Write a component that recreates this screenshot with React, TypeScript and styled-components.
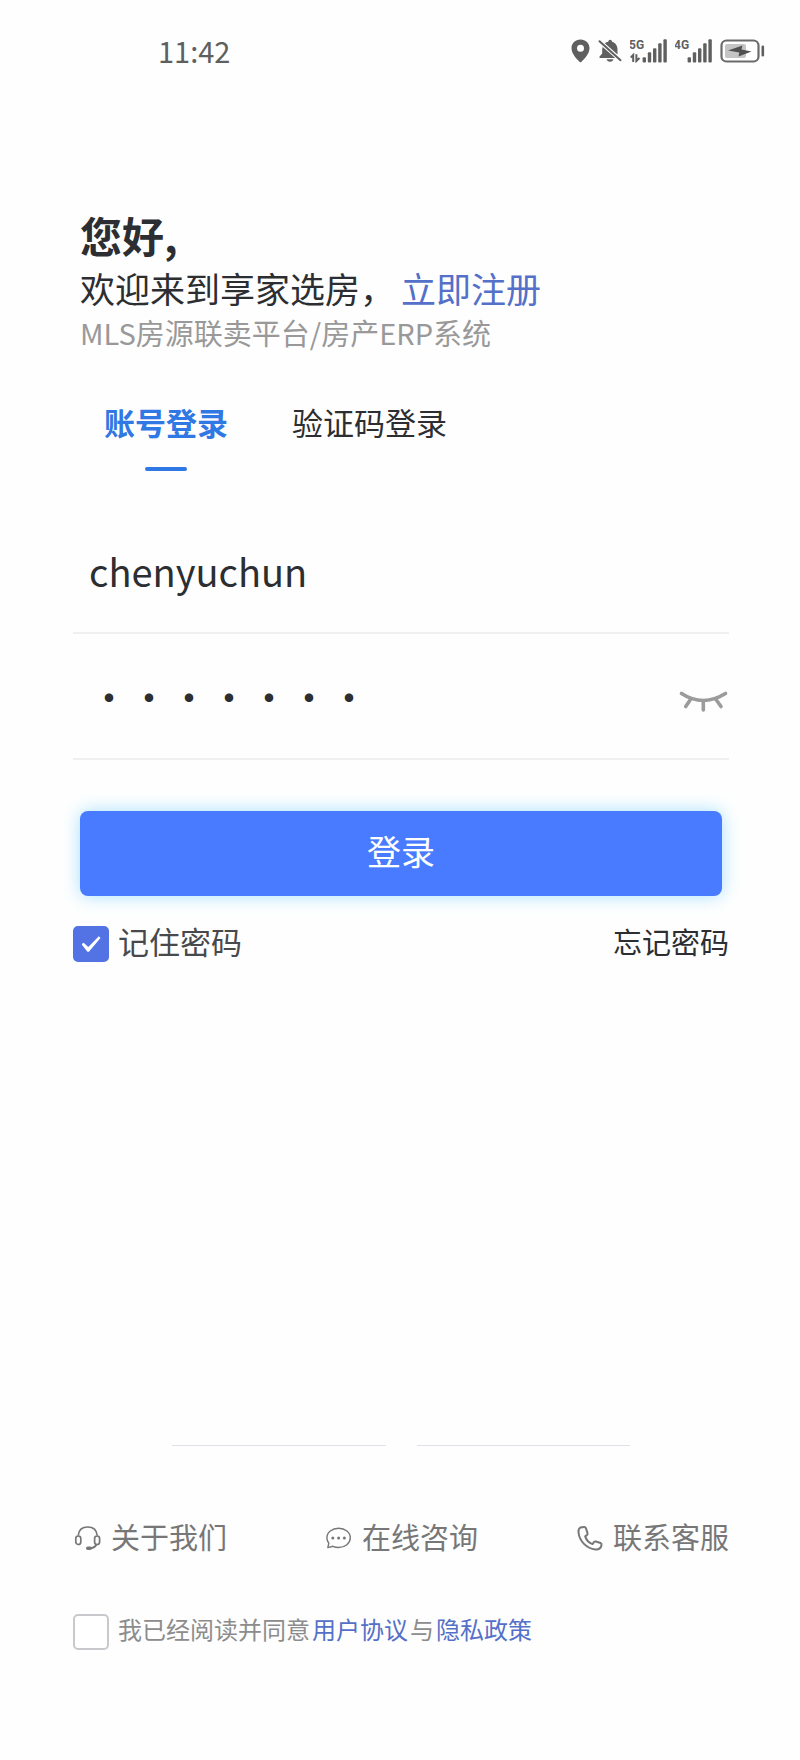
import React, { useState } from "react";
import styled, { createGlobalStyle } from "styled-components";

const GlobalStyle = createGlobalStyle`
  *, *::before, *::after { box-sizing: border-box; }
  body {
    margin: 0;
    background: #fefefe;
    color: #2c2e31;
    font-family: "Noto Sans CJK SC", "Noto Sans", sans-serif;
  }
  button, input { font-family: inherit; color: inherit; }
`;

const Page = styled.div`
  min-height: 100vh;
  display: flex;
  flex-direction: column;
`;

const StatusBar = styled.header`
  height: 102px;
  padding: 0 35px 0 158px;
  display: flex;
  align-items: center;
  justify-content: space-between;
  color: #5f5f5f;
`;

const Clock = styled.time`
  padding-bottom: 3px;
  font-size: 29px;
  line-height: 40px;
`;

const StatusIcons = styled.div`
  display: flex;
  align-items: center;
  gap: 8px;
`;

const Main = styled.main`
  flex: 1;
  display: flex;
  flex-direction: column;
  padding: 103px 71px 107px 73px;
`;

const Intro = styled.section`
  padding-left: 7px;
`;

const Greeting = styled.h1`
  margin: 0;
  font-size: 42px;
  line-height: 60px;
  font-weight: 700;
`;

const Welcome = styled.p`
  margin: 0;
  font-size: 35px;
  line-height: 46px;
`;

const RegisterLink = styled.a`
  margin-left: 6px;
  color: #5470c8;
  text-decoration: none;
`;

const Tagline = styled.p`
  margin: 0;
  font-size: 29px;
  line-height: 42px;
  color: #999;
`;

const Tabs = styled.div`
  display: flex;
  gap: 2px;
  margin-top: 44px;
`;

const Tab = styled.button<{ $active: boolean }>`
  display: flex;
  flex-direction: column;
  align-items: center;
  gap: 20px;
  padding: 0 31px;
  border: 0;
  background: none;
  font-size: 31px;
  line-height: 50px;
  font-weight: ${(p) => (p.$active ? 700 : 400)};
  color: ${(p) => (p.$active ? "#3078e4" : "inherit")};
  cursor: pointer;

  &::after {
    content: "";
    width: 42px;
    height: 4px;
    border-radius: 2px;
    background: ${(p) => (p.$active ? "#3078e4" : "transparent")};
  }
`;

const Form = styled.form`
  margin-top: 37px;
`;

const Field = styled.div`
  height: 126px;
  display: flex;
  align-items: center;
  border-bottom: 2px solid #f0f0f0;
`;

const TextInput = styled.input`
  flex: 1;
  min-width: 0;
  height: 80px;
  padding: 0 16px;
  border: 0;
  outline: 0;
  background: none;
  font-size: 38px;

  &[type="password"] {
    font-size: 40px;
  }
`;

const IconButton = styled.button`
  display: flex;
  padding: 11px 0 0;
  border: 0;
  background: none;
  cursor: pointer;
`;

const SubmitRow = styled.div`
  padding: 51px 7px 0;
`;

const SubmitButton = styled.button`
  width: 100%;
  height: 85px;
  padding: 0 0 6px;
  border: 0;
  border-radius: 8px;
  background: #487bff;
  box-shadow: 0 0 18px #a6e1ff;
  color: #fff;
  font-size: 34px;
  line-height: 48px;
  cursor: pointer;
`;

const Options = styled.div`
  display: flex;
  align-items: center;
  justify-content: space-between;
  margin-top: 27px;
`;

const CheckRow = styled.div<{ $size: number; $color: string }>`
  display: flex;
  align-items: center;
  gap: 9px;
  font-size: ${(p) => p.$size}px;
  line-height: 36px;
  color: ${(p) => p.$color};
`;

const CheckText = styled.label`
  padding-bottom: 6px;
`;

const Checkbox = styled.input`
  appearance: none;
  flex: none;
  width: 36px;
  height: 36px;
  margin: 0;
  border: 2px solid #c8c9cd;
  border-radius: 5px;
  background: #fff;
  display: grid;
  place-items: center;
  cursor: pointer;

  &:checked {
    border-color: #5372e4;
    background: #5372e4;
  }

  &:checked::after {
    content: "";
    width: 19px;
    height: 16px;
    background: #fff;
    clip-path: polygon(0 52%, 11% 42%, 36% 68%, 91% 2%, 100% 12%, 39% 98%, 31% 98%);
  }
`;

const ForgotLink = styled.a`
  padding-bottom: 6px;
  font-size: 29px;
  line-height: 36px;
  color: inherit;
  text-decoration: none;
`;

const Footer = styled.footer`
  margin-top: auto;
`;

const Rules = styled.div`
  display: flex;
  gap: 31px;
  padding: 0 99px;
`;

const Rule = styled.hr`
  flex: 1;
  margin: 0;
  border: 0;
  border-top: 1px solid #dfe2ea;
`;

const Contacts = styled.nav`
  display: flex;
  justify-content: space-between;
  margin: 68px 0 53px;
`;

const Contact = styled.a`
  display: flex;
  align-items: center;
  gap: 9px;
  font-size: 29px;
  line-height: 44px;
  color: #777;
  text-decoration: none;

  svg {
    margin-top: 4px;
  }
`;

const PolicyLink = styled.a`
  padding: 0 2px;
  color: #5470c8;
  text-decoration: none;
`;

const PinIcon = () => (
  <svg width="19" height="24" viewBox="0 0 19 24" aria-hidden="true">
    <path
      fill="currentColor"
      fillRule="evenodd"
      d="M9.500 .5C4.300 .5 .5 4.300 .5 9.300c0 5.700 5.500 11 8.200 13.600.5.500 1.100.5 1.600 0 2.700-2.600 8.200-7.900 8.200-13.600C18.500 4.300 14.700.5 9.500.5Zm0 5.200a3.500 3.500 0 1 1 0 7 3.500 3.500 0 0 1 0-7Z"
    />
  </svg>
);

const MutedBellIcon = () => (
  <svg width="24" height="24" viewBox="0 0 24 24" aria-hidden="true">
    <g fill="currentColor">
      <path d="M4.700 8 17.200 19H2.200c-.8 0-1.100-.8-.6-1.400L4.200 14.500V10.500c0-.9.200-1.700.5-2.500Z" />
      <path d="M6.800 4.300C7.800 3.500 9 3 10.200 2.800 10.500 1.500 11.200.8 12.200.8s1.700.7 1.900 2c3.200.9 5.400 3.900 5.400 7.400v5.200Z" />
      <path d="M8.500 20.300h7c-.6 1.700-1.900 2.500-3.500 2.500s-2.900-.8-3.500-2.500Z" />
    </g>
    <path d="M1.500 2.200 22.500 21.200" stroke="currentColor" strokeWidth="2" strokeLinecap="round" />
  </svg>
);

const BAR_TOPS = [18, 13, 9, 4, 0];

const SignalIcon = ({ label, data }: { label: string; data?: boolean }) => (
  <svg width="37" height="24" viewBox="0 0 37 24" role="img" aria-label={label}>
    <text
      x="-1"
      y="10"
      fontFamily="'Liberation Sans Narrow', Roboto, sans-serif"
      fontSize="12"
      fontWeight="700"
      fill="currentColor"
    >
      {label}
    </text>
    {data && (
      <path
        d="M.8 18.500 3.200 16V23M6.400 15.200V22L9.500 19"
        fill="none"
        stroke="currentColor"
        strokeWidth="2"
      />
    )}
    {BAR_TOPS.map((top, i) => (
      <rect
        key={top}
        x={12.6 + i * 5.2}
        y={top + 0.3}
        width="3.400"
        height={23.2 - top}
        rx="1"
        fill="currentColor"
      />
    ))}
  </svg>
);

const BatteryIcon = () => (
  <svg width="45" height="24" viewBox="0 0 45 24" aria-hidden="true">
    <rect x="1.500" y="1.500" width="37" height="21" rx="5" fill="none" stroke="#6a6a6a" strokeWidth="2.200" />
    <rect x="5" y="5" width="21" height="14" rx="2" fill="#c4c4c4" />
    <path d="M8 11.500 22.500 6.500 21.500 10.500 31.500 12.600 18.500 17.500 19.300 13.600Z" fill="#505050" />
    <rect x="41.500" y="6.500" width="2.600" height="11" rx="1.300" fill="currentColor" />
  </svg>
);

const ClosedEyeIcon = () => (
  <svg width="52" height="24" viewBox="0 0 52 24" aria-hidden="true">
    <g fill="none" stroke="#9b9b9b" strokeWidth="3.600" strokeLinecap="round">
      <path d="M4.500 3.500Q26 17.500 48.500 3.500" />
      <path d="M13.500 9.500 8.700 16.500M26.300 11V20M39 9.500 44 16.500" />
    </g>
  </svg>
);

const HeadsetIcon = () => (
  <svg width="29" height="28" viewBox="0 0 29 28" aria-hidden="true">
    <g fill="none" stroke="currentColor" strokeWidth="1.700">
      <path d="M5.200 11.500C5.700 5.800 9.500 3 14.700 3s9 2.800 9.500 8.500" />
      <rect x="2.800" y="12" width="5" height="8.500" rx="2.500" />
      <rect x="21.600" y="12" width="5" height="8.500" rx="2.500" />
      <path d="M23.500 20.500C22.300 22.800 20.600 24 18 24.200" />
    </g>
    <rect x="13" y="22.400" width="6" height="3.600" rx="1.800" fill="currentColor" />
  </svg>
);

const ChatIcon = () => (
  <svg width="29" height="28" viewBox="0 0 29 28" aria-hidden="true">
    <path
      d="M4.800 19.300C3.500 17.600 2.900 15.800 2.900 13.800 2.900 8.300 8.100 4.300 14.600 4.300s11.700 4 11.700 9.500-5.200 9.700-11.700 9.700c-2 0-4-.4-5.600-1.200l-5.200 1.300Z"
      fill="none"
      stroke="currentColor"
      strokeWidth="1.400"
      strokeLinejoin="round"
    />
    <g fill="currentColor">
      <circle cx="8.800" cy="14" r="1.500" />
      <circle cx="14.600" cy="14" r="1.500" />
      <circle cx="20.400" cy="14" r="1.500" />
    </g>
  </svg>
);

const PhoneIcon = () => (
  <svg width="29" height="28" viewBox="0 0 29 28" aria-hidden="true">
    <path
      d="M5.400 3.500C4 4.300 3.200 6 3.500 8.500 4.500 17 11.500 24.800 20.500 25.400c3 .2 5.400-1.400 6-4.200.2-1-.1-1.800-1-2.200l-4.600-1.500c-.9-.2-1.500 0-2.100.7l-1.300 1.900c-3.300-1.100-6.200-4.200-7.300-7.700l1.700-1.300c.7-.6.8-1.100.6-2L11 4.400c-.3-.9-.9-1.400-1.800-1.400-1.300 0-2.800 0-3.800.5Z"
      fill="none"
      stroke="currentColor"
      strokeWidth="2"
      strokeLinejoin="round"
    />
  </svg>
);

export default function App() {
  const [tab, setTab] = useState("account");
  const [user, setUser] = useState("chenyuchun");
  const [password, setPassword] = useState("1234567");
  const [visible, setVisible] = useState(false);

  return (
    <Page>
      <GlobalStyle />
      <StatusBar>
        <Clock>11:42</Clock>
        <StatusIcons>
          <PinIcon />
          <MutedBellIcon />
          <SignalIcon label="5G" data />
          <SignalIcon label="4G" />
          <BatteryIcon />
        </StatusIcons>
      </StatusBar>
      <Main>
        <Intro>
          <Greeting>您好,</Greeting>
          <Welcome>
            欢迎来到享家选房，<RegisterLink href="#register">立即注册</RegisterLink>
          </Welcome>
          <Tagline>MLS房源联卖平台/房产ERP系统</Tagline>
        </Intro>
        <Tabs role="tablist">
          <Tab type="button" role="tab" aria-selected={tab === "account"} $active={tab === "account"} onClick={() => setTab("account")}>
            账号登录
          </Tab>
          <Tab type="button" role="tab" aria-selected={tab === "code"} $active={tab === "code"} onClick={() => setTab("code")}>
            验证码登录
          </Tab>
        </Tabs>
        <Form onSubmit={(e) => e.preventDefault()}>
          <Field>
            <TextInput aria-label="账号" type="text" value={user} onChange={(e) => setUser(e.target.value)} />
          </Field>
          <Field>
            <TextInput
              aria-label="密码"
              type={visible ? "text" : "password"}
              value={password}
              onChange={(e) => setPassword(e.target.value)}
            />
            <IconButton type="button" aria-label="显示密码" onClick={() => setVisible(!visible)}>
              <ClosedEyeIcon />
            </IconButton>
          </Field>
          <SubmitRow>
            <SubmitButton type="submit">登录</SubmitButton>
          </SubmitRow>
          <Options>
            <CheckRow $size={31} $color="#48494c">
              <Checkbox type="checkbox" id="remember" defaultChecked />
              <CheckText htmlFor="remember">记住密码</CheckText>
            </CheckRow>
            <ForgotLink href="#forgot">忘记密码</ForgotLink>
          </Options>
        </Form>
        <Footer>
          <Rules>
            <Rule />
            <Rule />
          </Rules>
          <Contacts>
            <Contact href="#about">
              <HeadsetIcon />
              关于我们
            </Contact>
            <Contact href="#chat">
              <ChatIcon />
              在线咨询
            </Contact>
            <Contact href="#service">
              <PhoneIcon />
              联系客服
            </Contact>
          </Contacts>
          <CheckRow $size={24} $color="#8c8c8c">
            <Checkbox type="checkbox" id="agree" />
            <CheckText htmlFor="agree">
              我已经阅读并同意<PolicyLink href="#terms">用户协议</PolicyLink>与<PolicyLink href="#privacy">隐私政策</PolicyLink>
            </CheckText>
          </CheckRow>
        </Footer>
      </Main>
    </Page>
  );
}
